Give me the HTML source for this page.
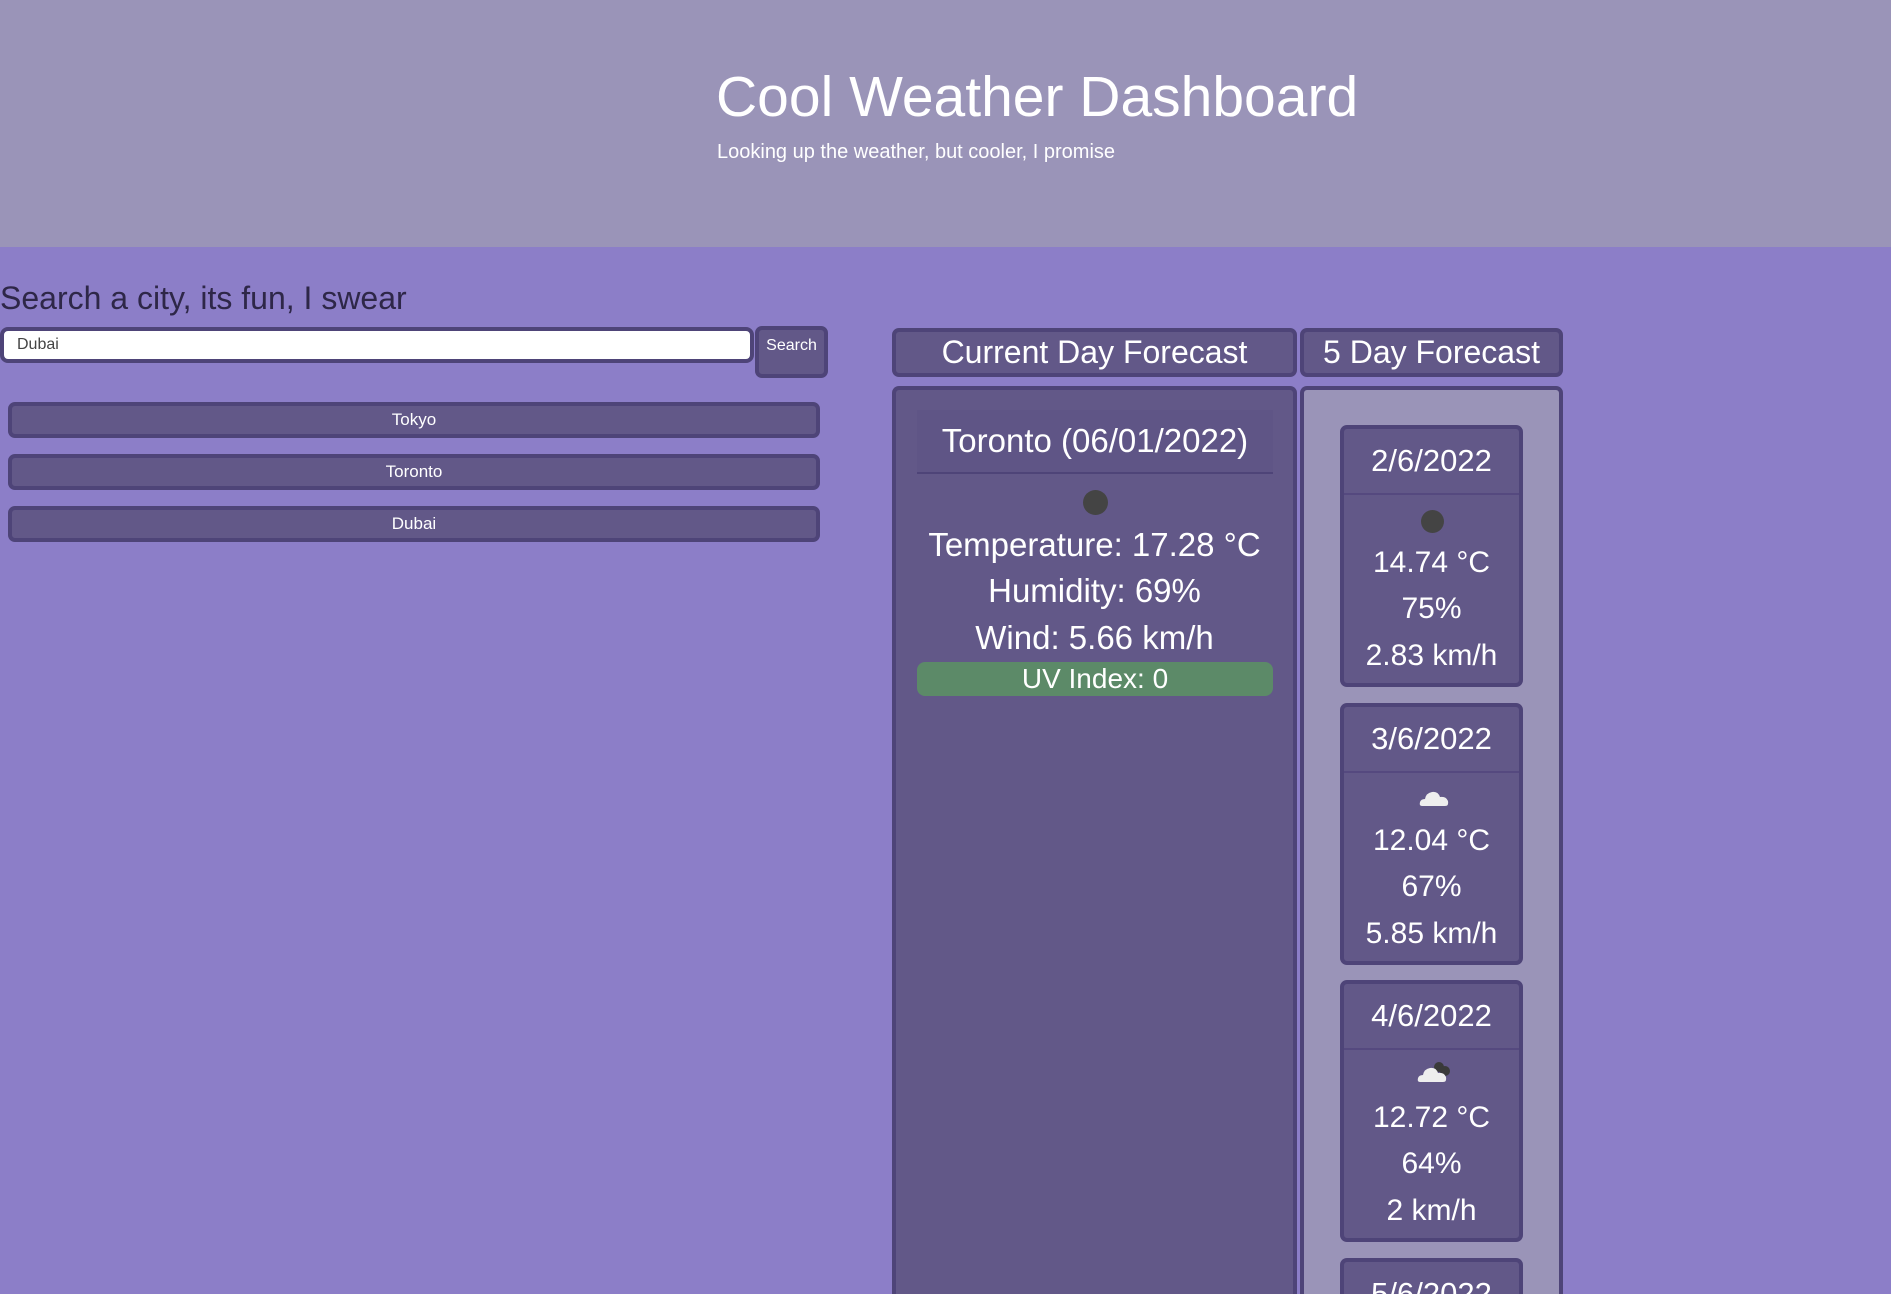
<!DOCTYPE html>
<html><head><meta charset="utf-8"><style>
*{box-sizing:border-box;margin:0;padding:0}
html,body{width:1891px;height:1294px;overflow:hidden}
body{background:#8c7ec8;font-family:"Liberation Sans",sans-serif;color:#fff}
#w{position:relative;width:1891px;height:1294px;overflow:hidden}
.a{position:absolute}
.box{background:#625888;border:4px solid #4e4478;border-radius:7px}
.c{text-align:center}
.ln{position:absolute;left:0;right:0;text-align:center}
</style></head><body><div id="w">
<div class="a" style="left:0;top:0;width:1891px;height:247px;background:#9a94b8"></div>
<div class="a" style="left:716px;top:64px;font-size:57px;line-height:66px">Cool Weather Dashboard</div>
<div class="a" style="left:717px;top:140px;font-size:20px;line-height:24px">Looking up the weather, but cooler, I promise</div>

<div class="a" style="left:0;top:278px;font-size:32px;line-height:40px;color:#2e2748">Search a city, its fun, I swear</div>
<div class="a" style="left:0;top:327px;width:754px;height:36px;background:#fff;border:4px solid #4e4478;border-radius:8px;color:#444;font-size:16px;line-height:28px;padding-left:13px">Dubai</div>
<div class="a box" style="left:755px;top:326px;width:73px;height:52px;font-size:16px;padding-top:7px;text-align:center">Search</div>
<div class="a box c" style="left:8px;top:402px;width:812px;height:36px;font-size:17px;line-height:28px">Tokyo</div>
<div class="a box c" style="left:8px;top:454px;width:812px;height:36px;font-size:17px;line-height:28px">Toronto</div>
<div class="a box c" style="left:8px;top:506px;width:812px;height:36px;font-size:17px;line-height:28px">Dubai</div>

<div class="a box c" style="left:892px;top:328px;width:405px;height:49px;font-size:32px;line-height:41px">Current Day Forecast</div>
<div class="a box c" style="left:1300px;top:328px;width:263px;height:49px;font-size:32px;line-height:41px">5 Day Forecast</div>

<div class="a box" style="left:892px;top:386px;width:405px;height:908px;border-bottom:none;border-radius:7px 7px 0 0">
  <div class="a" style="left:21px;top:20px;width:356px;height:64px;background:#5f5586;border-bottom:2px solid #4e4478;font-size:33px;line-height:62px;text-align:center">Toronto (06/01/2022)</div>
  <div class="a" style="left:187px;top:100px;width:25px;height:25px;border-radius:50%;background:#444"></div>
  <div class="ln" style="top:133px;font-size:33px;line-height:44px">Temperature: 17.28 °C</div>
  <div class="ln" style="top:179px;font-size:33px;line-height:44px">Humidity: 69%</div>
  <div class="ln" style="top:226px;font-size:33px;line-height:44px">Wind: 5.66 km/h</div>
  <div class="a" style="left:21px;top:272px;width:356px;height:34px;background:#5c8a68;border-radius:8px;font-size:28px;line-height:34px;text-align:center">UV Index: 0</div>
</div>

<div class="a" style="left:1300px;top:386px;width:263px;height:908px;background:#9a94b8;border:4px solid #4e4478;border-bottom:none;border-radius:7px 7px 0 0"></div>

<div class="a box" style="left:1340px;top:425px;width:183px;height:262px">
  <div style="height:66px;border-bottom:2px solid #55497f;font-size:31px;line-height:64px;text-align:center">2/6/2022</div>
  <div class="a" style="left:77px;top:81px;width:23px;height:23px;border-radius:50%;background:#444"></div>
  <div class="ln" style="top:114px;font-size:30px;line-height:40px">14.74 °C</div>
  <div class="ln" style="top:160px;font-size:30px;line-height:40px">75%</div>
  <div class="ln" style="top:207px;font-size:30px;line-height:40px">2.83 km/h</div>
</div>
<div class="a box" style="left:1340px;top:703px;width:183px;height:262px">
  <div style="height:66px;border-bottom:2px solid #55497f;font-size:31px;line-height:64px;text-align:center">3/6/2022</div>
  <svg class="a" style="left:75px;top:80px" width="32" height="20" viewBox="0 0 32 20"><path d="M3 19 Q0 19 1 15 Q2 12 6 12 Q7 6 13 5 Q19 4 21 10 Q27 9 29 14 Q30 19 26 19 Z" fill="#eee"/></svg>
  <div class="ln" style="top:114px;font-size:30px;line-height:40px">12.04 °C</div>
  <div class="ln" style="top:160px;font-size:30px;line-height:40px">67%</div>
  <div class="ln" style="top:207px;font-size:30px;line-height:40px">5.85 km/h</div>
</div>
<div class="a box" style="left:1340px;top:980px;width:183px;height:262px">
  <div style="height:66px;border-bottom:2px solid #55497f;font-size:31px;line-height:64px;text-align:center">4/6/2022</div>
  <svg class="a" style="left:73px;top:76px" width="36" height="24" viewBox="0 0 36 24"><circle cx="22" cy="7" r="5" fill="#3a3a3a"/><circle cx="28" cy="11" r="5" fill="#3a3a3a"/><path d="M3 22 Q0 22 1 18 Q2 15 6 15 Q7 9 13 8 Q19 7 21 13 Q27 12 29 17 Q30 22 26 22 Z" fill="#eee"/></svg>
  <div class="ln" style="top:114px;font-size:30px;line-height:40px">12.72 °C</div>
  <div class="ln" style="top:160px;font-size:30px;line-height:40px">64%</div>
  <div class="ln" style="top:207px;font-size:30px;line-height:40px">2 km/h</div>
</div>
<div class="a box" style="left:1340px;top:1258px;width:183px;height:36px;border-bottom:none;border-radius:7px 7px 0 0;overflow:hidden">
  <div style="height:66px;font-size:31px;line-height:64px;text-align:center">5/6/2022</div>
</div>
</div></body></html>
